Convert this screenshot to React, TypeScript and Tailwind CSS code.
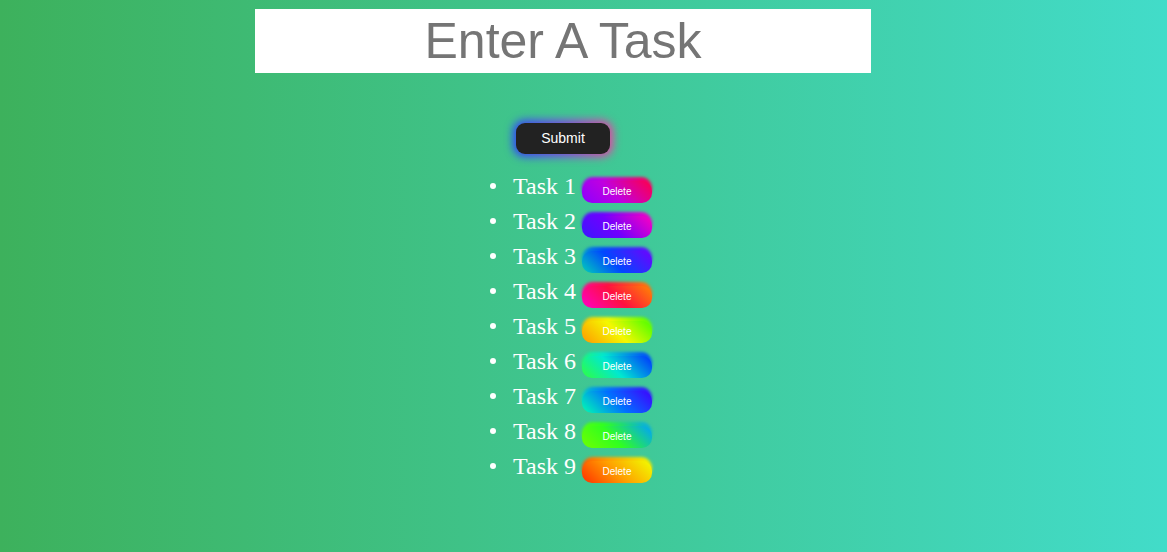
import React from "react";

const tasks = [
  { name: "Task 1", bg: "bg-[linear-gradient(45deg,#8a00ff,#c000e0_45%,#ff0048)]" },
  { name: "Task 2", bg: "bg-[linear-gradient(45deg,#3a18ff,#7000ff_45%,#ff00c0)]" },
  { name: "Task 3", bg: "bg-[linear-gradient(45deg,#00d0b8,#0048ff_45%,#7000ff)]" },
  { name: "Task 4", bg: "bg-[linear-gradient(45deg,#ff00c8,#ff1040_50%,#ff8800)]" },
  { name: "Task 5", bg: "bg-[linear-gradient(45deg,#ff9800,#f4f800_50%,#48ff00)]" },
  { name: "Task 6", bg: "bg-[linear-gradient(45deg,#30ff40,#00e8d0_45%,#0030ff)]" },
  { name: "Task 7", bg: "bg-[linear-gradient(45deg,#00ffb0,#0070ff_50%,#4000ff)]" },
  { name: "Task 8", bg: "bg-[linear-gradient(45deg,#70ff00,#30ff20_45%,#00a0ff)]" },
  { name: "Task 9", bg: "bg-[linear-gradient(45deg,#ff3000,#ffa000_50%,#f0ff00)]" },
];

export default function App() {
  return (
    <div className="min-h-screen w-full bg-[linear-gradient(to_right,#3db15c,#42dcc9)]">
      <div className="w-[1126px] flex flex-col items-center pt-[9px]">
        <input
          type="text"
          placeholder="Enter A Task"
          className="w-[616px] h-[64px] bg-white text-center text-[50px] text-[#333] placeholder:text-[#757575] outline-none border-0 font-['Liberation_Sans',Arial,sans-serif]"
        />
        <div className="relative mt-[50px] w-[94px] h-[31px]">
          <div className="absolute inset-[-3px] rounded-[12px] bg-[linear-gradient(90deg,#2a40ff,#8040e0_50%,#f040a0)] blur-[4px]" />
          <button className="relative w-[94px] h-[31px] rounded-[9px] bg-[#222222] text-white text-[14px] font-['Liberation_Sans',Arial,sans-serif]">
            Submit
          </button>
        </div>
        <ul className="mt-[18px] pl-[16px] flex flex-col">
          {tasks.map((t) => (
            <li key={t.name} className="flex items-start h-[35px]">
              <span className="mt-[11px] w-[6px] h-[6px] rounded-full bg-white" />
              <span className="ml-[17px] text-[24px] leading-[28px] text-white font-['Liberation_Serif','Times_New_Roman',serif]">
                {t.name}
              </span>
              <div className="relative ml-[6px] mt-[5px] w-[70px] h-[22px]">
                <div className={`absolute inset-0 rounded-[11px] blur-[1.5px] ${t.bg}`} />
                <button
                  className={`relative w-[70px] h-[22px] rounded-[10px] text-white text-[10px] font-['Liberation_Sans',Arial,sans-serif] ${t.bg}`}
                >
                  Delete
                </button>
              </div>
            </li>
          ))}
        </ul>
      </div>
    </div>
  );
}
